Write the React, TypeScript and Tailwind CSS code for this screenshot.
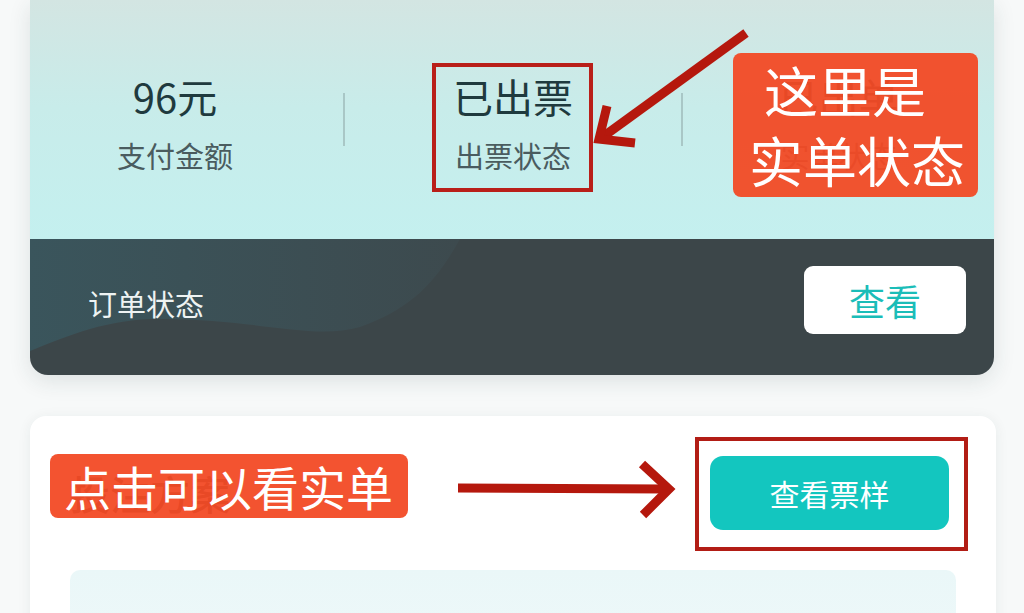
const cjk = { fontFamily: '"Noto Sans CJK SC", "Noto Sans", sans-serif' };

function Stat({ value, label }: { value: string; label: string }) {
	return (
		<div className="flex flex-col items-center">
			<span className="text-[40px] leading-[48px] text-[#1f3a3e]">{value}</span>
			<span className="mt-[17px] text-[29px] leading-[36px] text-[#4a5c5f]">{label}</span>
		</div>
	);
}

function Divider() {
	return <div className="w-[2px] h-[53px] bg-[#a9c7c6] mt-[-6px]" />;
}

function OrderCard() {
	return (
		<div className="mx-[30px] rounded-b-[18px] overflow-hidden shadow-[0_6px_22px_rgba(30,60,60,0.12)]">
			{/* Stats area */}
			<div className="h-[239px] pt-[72px] bg-[linear-gradient(180deg,#d3e5e2_0%,#c8ecea_45%,#c4f0ef_100%)]">
				<div className="flex items-center">
					<div className="w-[290px] flex justify-center">
						<Stat value="96元" label="支付金额" />
					</div>
					<div className="ml-[23px]">
						<Divider />
					</div>
					<div className="w-[336px] flex justify-center">
						<Stat value="已出票" label="出票状态" />
					</div>
					<Divider />
					<div className="flex-1 flex justify-center">
						<Stat value="已出单" label="实单状态" />
					</div>
				</div>
			</div>

			{/* Dark status bar */}
			<div className="relative h-[136px] bg-[#3c4649] flex items-center justify-between pl-[58px] pr-[28px]">
				<svg className="absolute inset-0 w-full h-full" viewBox="0 0 964 136" preserveAspectRatio="none">
					<defs>
						<linearGradient id="wave" x1="0" y1="0" x2="1" y2="0">
							<stop offset="0" stopColor="#3a555c" />
							<stop offset="1" stopColor="#3d4a4e" />
						</linearGradient>
					</defs>
					<path d="M0 0 H430 C405 45 380 70 330 88 C280 102 220 78 120 80 C70 82 30 100 0 112 Z" fill="url(#wave)" />
				</svg>
				<span className="relative text-[29px] leading-[36px] text-[#eef3f3] mt-[-8px]">订单状态</span>
				<button className="relative w-[162px] h-[68px] rounded-[9px] bg-white text-[36px] text-[#1bbdb8] mt-[-14px]">
					查看
				</button>
			</div>
		</div>
	);
}

function PlanCard() {
	return (
		<div className="mt-[41px] ml-[30px] mr-[28px] rounded-[16px] bg-white shadow-[0_2px_14px_rgba(30,60,60,0.07)] pt-[40px] px-[40px] pb-[40px]">
			<div className="flex items-center justify-between">
				<span className="text-[40px] leading-[48px] font-medium text-[#2b3a3c]">投注方案</span>
				<button className="w-[239px] h-[74px] mr-[7px] rounded-[13px] bg-[#13c6bf] text-[30px] text-white">
					查看票样
				</button>
			</div>
			<div className="mt-[40px] h-[200px] rounded-[10px] bg-[linear-gradient(180deg,#eaf7f8_0%,#f3fafb_100%)]" />
		</div>
	);
}

export default function App() {
	return (
		<div className="relative w-[1024px] h-[613px] overflow-hidden bg-[#f7f9f9]" style={cjk}>
			<OrderCard />
			<PlanCard />

			{/* Annotations */}
			<div className="absolute left-[432px] top-[63px] w-[161px] h-[129px] border-[4px] border-[#b91f19]" />
			<div className="absolute left-[695px] top-[437px] w-[273px] h-[114px] border-[4px] border-[#b21d15]" />

			<svg className="absolute inset-0 w-[1024px] h-[613px] pointer-events-none" viewBox="0 0 1024 613">
				<g stroke="#b5180d" strokeWidth="9" fill="none">
					<line x1="746" y1="33" x2="604" y2="136" />
					<polyline points="607,106 599,139 635,143" strokeLinejoin="miter" />
					<line x1="458" y1="488" x2="666" y2="489" />
					<polyline points="642,464 669,489 643,515" strokeLinejoin="miter" />
				</g>
			</svg>

			<div className="absolute left-[733px] top-[53px] w-[245px] h-[144px] rounded-[8px] bg-[#f24a25]/95 text-white text-[54px] leading-[70px] pt-[2px]">
				<div className="pl-[31px]">这里是</div>
				<div className="pl-[16px]">实单状态</div>
			</div>

			<div className="absolute left-[50px] top-[454px] w-[358px] h-[64px] rounded-[8px] bg-[#f24a25]/95 text-white text-[47px] leading-[64px] pl-[14px]">
				点击可以看实单
			</div>
		</div>
	);
}
